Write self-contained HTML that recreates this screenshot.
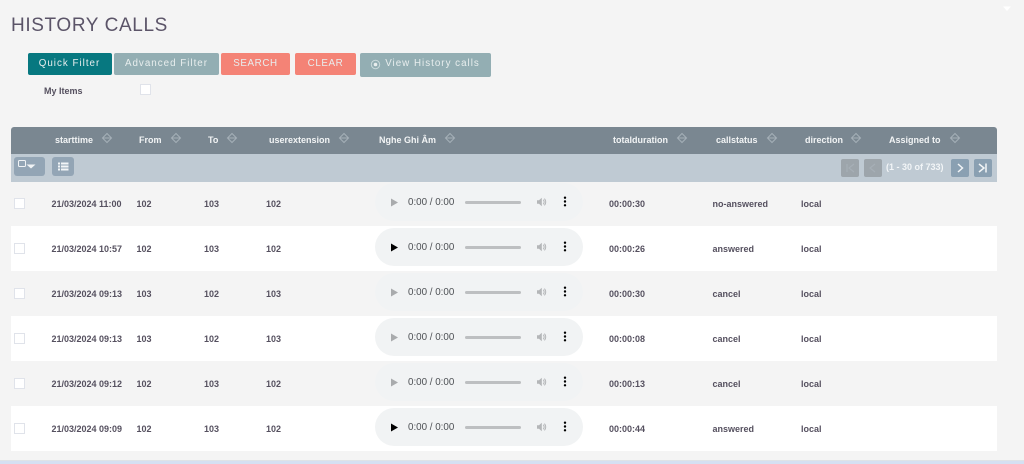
<!DOCTYPE html>
<html><head><meta charset="utf-8"><style>
*{box-sizing:border-box}
html,body{margin:0;padding:0;background:#f4f4f4}
body{width:1024px;height:464px;overflow:hidden;position:relative;font-family:"Liberation Sans","Noto Sans CJK JP",sans-serif;filter:blur(.35px)}
.a{position:absolute;white-space:nowrap}
.btn{position:absolute;top:53px;height:22px;border-radius:2px;color:#e8eeee;font-size:9.8px;line-height:22px;text-align:center;letter-spacing:1px}
.hd{position:absolute;top:134px;font-size:9px;font-weight:bold;color:#f2f4f5;line-height:12px;white-space:nowrap}
.si{position:absolute;top:132px;width:12px;height:12px}
.row{position:absolute;left:11px;width:986px;height:45px}
.t{position:absolute;font-size:9px;font-weight:bold;color:#55505f;line-height:12px;white-space:nowrap;top:16.500px}
.cb{position:absolute;left:3px;top:17px;width:11px;height:11px;background:#fff;border:1px solid #e0e3ea}
.pl{position:absolute;left:364px;top:2px;width:208px;height:38px;border-radius:19px;background:#f1f3f4}
.pl .tm{position:absolute;left:33px;top:12.500px;font-size:9.800px;color:#4d5054;line-height:13px;white-space:nowrap}
.pl .tr{position:absolute;left:90px;top:17.500px;width:56px;height:3px;border-radius:2px;background:#bdbfc1}
.pl svg{position:absolute}
.pg{position:absolute;top:159px;width:18px;height:18px;border-radius:2px}
</style></head><body>
<div class="a" style="left:11px;top:13.500px;font-size:19px;line-height:23px;color:#5b5468;letter-spacing:.62px">HISTORY CALLS</div>
<div class="btn" style="left:27.500px;width:84px;background:#077880">Quick Filter</div>
<div class="btn" style="left:114px;width:105px;background:#93aeb3">Advanced Filter</div>
<div class="btn" style="left:221px;width:69px;background:#f48376;letter-spacing:.6px">SEARCH</div>
<div class="btn" style="left:295px;width:61px;background:#f48376;letter-spacing:.6px">CLEAR</div>
<div class="btn" style="left:360px;width:131px;height:24px;background:#93aeb3;padding-left:14px">View History calls</div>
<svg class="a" style="left:370px;top:59px" width="11" height="11" viewBox="0 0 11 11"><circle cx="5.500" cy="5.500" r="4.200" fill="none" stroke="#c9d9db" stroke-width="1"/><circle cx="5.500" cy="5.500" r="1.800" fill="#e8eeee"/></svg>
<div class="a" style="left:44px;top:85px;font-size:9px;font-weight:bold;color:#55505f;line-height:12px">My Items</div>
<div class="a" style="left:140px;top:84px;width:11px;height:11px;background:#fff;border:1px solid #e0e3ea"></div>
<svg width="0" height="0" style="position:absolute"><defs>
<g id="s"><path d="M6 1.500L10.500 6 6 10.500 1.500 6z" fill="none" stroke="#a5b0b8" stroke-width="1"/><path d="M2 6h8" stroke="#a5b0b8" stroke-width="1"/></g>
<g id="v"><path d="M1 4.200h2l2.800-2.400v8.400L3 7.800H1z" fill="#b4b6b8"/><path d="M7.200 3.800a3 3 0 0 1 0 4.400M8.400 2.600a5 5 0 0 1 0 6.800" fill="none" stroke="#b4b6b8" stroke-width="1"/></g>
<g id="m"><circle cx="2" cy="1.700" r="1.200"/><circle cx="2" cy="5.500" r="1.200"/><circle cx="2" cy="9.300" r="1.200"/></g>
</defs></svg>
<div class="a" style="left:11px;top:127px;width:986px;height:27px;background:#7a8791;border-radius:3px 3px 0 0"></div>
<div class="a" style="left:11px;top:154px;width:986px;height:28px;background:#bfcad3"></div>
<div class="hd" style="left:55px">starttime</div><svg class="si" style="left:101px" viewBox="0 0 12 12"><use href="#s"/></svg>
<div class="hd" style="left:139px">From</div><svg class="si" style="left:170px" viewBox="0 0 12 12"><use href="#s"/></svg>
<div class="hd" style="left:208px">To</div><svg class="si" style="left:226px" viewBox="0 0 12 12"><use href="#s"/></svg>
<div class="hd" style="left:269px">userextension</div><svg class="si" style="left:338px" viewBox="0 0 12 12"><use href="#s"/></svg>
<div class="hd" style="left:379px">Nghe Ghi Âm</div><svg class="si" style="left:444px" viewBox="0 0 12 12"><use href="#s"/></svg>
<div class="hd" style="left:613px">totalduration</div><svg class="si" style="left:676px" viewBox="0 0 12 12"><use href="#s"/></svg>
<div class="hd" style="left:716px">callstatus</div><svg class="si" style="left:766px" viewBox="0 0 12 12"><use href="#s"/></svg>
<div class="hd" style="left:805px">direction</div><svg class="si" style="left:850px" viewBox="0 0 12 12"><use href="#s"/></svg>
<div class="hd" style="left:889px">Assigned to</div><svg class="si" style="left:949px" viewBox="0 0 12 12"><use href="#s"/></svg>
<div class="a" style="left:14px;top:157px;width:31px;height:19px;border-radius:3px;background:#93a5b5"></div>
<div class="a" style="left:18px;top:160px;width:8px;height:7px;border:1.300px solid #f0f3f5;border-radius:1.500px"></div>
<svg class="a" style="left:26px;top:164px" width="10" height="5"><path d="M.5 .5h9L5 4.500z" fill="#f0f3f5"/></svg>
<div class="a" style="left:52px;top:157px;width:22px;height:19px;border-radius:3px;background:#93a5b5"></div>
<svg class="a" style="left:57px;top:162px" width="12" height="9"><path d="M1 .5h2v2H1zM4 .5h7.500v2H4zM1 3.500h2v2H1zM4 3.500h7.500v2H4zM1 6.500h2v2H1zM4 6.500h7.500v2H4z" fill="#f2f5f7"/></svg>
<div class="pg" style="left:841px;background:#9da5ab"></div>
<div class="pg" style="left:864px;background:#9da5ab"></div>
<svg class="a" style="left:841px;top:159px" width="41" height="18" fill="none" stroke="#a6afb6" stroke-width="1.200"><path d="M6 5v8M13 5L8 9l5 4M34 5l-5 4 5 4"/></svg>
<div class="a" style="left:886px;top:161px;font-size:9px;font-weight:bold;color:#f2f5f7;line-height:13px">(1 - 30 of 733)</div>
<div class="pg" style="left:951px;background:#8aa0b2"></div>
<div class="pg" style="left:974px;background:#8aa0b2"></div>
<svg class="a" style="left:951px;top:159px" width="41" height="18" fill="none" stroke="#f2f5f7" stroke-width="1.500"><path d="M7 5l4.500 4L7 13M28 5l5 4-5 4M35 4.500v9"/></svg>

<div class="row" style="top:181px">
<div class="cb"></div><div class="t" style="left:40.500px">21/03/2024 11:00</div><div class="t" style="left:125.500px">102</div><div class="t" style="left:193px">103</div><div class="t" style="left:255px">102</div>
<div class="pl"><svg style="left:15px;top:15px" width="9" height="9"><path d="M1 .5L8 4.500 1 8.500z" fill="#a9abad"/></svg><div class="tm">0:00 / 0:00</div><div class="tr"></div><svg style="left:161px;top:13px" width="12" height="12"><use href="#v"/></svg><svg style="left:188px;top:13px" width="4" height="11"><use href="#m"/></svg></div>
<div class="t" style="left:598px">00:00:30</div><div class="t" style="left:701.500px">no-answered</div><div class="t" style="left:790px">local</div></div>

<div class="row" style="top:226px;background:#fff">
<div class="cb"></div><div class="t" style="left:40.500px">21/03/2024 10:57</div><div class="t" style="left:125.500px">102</div><div class="t" style="left:193px">103</div><div class="t" style="left:255px">102</div>
<div class="pl"><svg style="left:15px;top:15px" width="9" height="9"><path d="M1 .5L8 4.500 1 8.500z" fill="#000"/></svg><div class="tm">0:00 / 0:00</div><div class="tr"></div><svg style="left:161px;top:13px" width="12" height="12"><use href="#v"/></svg><svg style="left:188px;top:13px" width="4" height="11"><use href="#m"/></svg></div>
<div class="t" style="left:598px">00:00:26</div><div class="t" style="left:701.500px">answered</div><div class="t" style="left:790px">local</div></div>

<div class="row" style="top:271px">
<div class="cb"></div><div class="t" style="left:40.500px">21/03/2024 09:13</div><div class="t" style="left:125.500px">103</div><div class="t" style="left:193px">102</div><div class="t" style="left:255px">103</div>
<div class="pl"><svg style="left:15px;top:15px" width="9" height="9"><path d="M1 .5L8 4.500 1 8.500z" fill="#a9abad"/></svg><div class="tm">0:00 / 0:00</div><div class="tr"></div><svg style="left:161px;top:13px" width="12" height="12"><use href="#v"/></svg><svg style="left:188px;top:13px" width="4" height="11"><use href="#m"/></svg></div>
<div class="t" style="left:598px">00:00:30</div><div class="t" style="left:701.500px">cancel</div><div class="t" style="left:790px">local</div></div>

<div class="row" style="top:316px;background:#fff">
<div class="cb"></div><div class="t" style="left:40.500px">21/03/2024 09:13</div><div class="t" style="left:125.500px">103</div><div class="t" style="left:193px">102</div><div class="t" style="left:255px">103</div>
<div class="pl"><svg style="left:15px;top:15px" width="9" height="9"><path d="M1 .5L8 4.500 1 8.500z" fill="#a9abad"/></svg><div class="tm">0:00 / 0:00</div><div class="tr"></div><svg style="left:161px;top:13px" width="12" height="12"><use href="#v"/></svg><svg style="left:188px;top:13px" width="4" height="11"><use href="#m"/></svg></div>
<div class="t" style="left:598px">00:00:08</div><div class="t" style="left:701.500px">cancel</div><div class="t" style="left:790px">local</div></div>

<div class="row" style="top:361px">
<div class="cb"></div><div class="t" style="left:40.500px">21/03/2024 09:12</div><div class="t" style="left:125.500px">102</div><div class="t" style="left:193px">103</div><div class="t" style="left:255px">102</div>
<div class="pl"><svg style="left:15px;top:15px" width="9" height="9"><path d="M1 .5L8 4.500 1 8.500z" fill="#a9abad"/></svg><div class="tm">0:00 / 0:00</div><div class="tr"></div><svg style="left:161px;top:13px" width="12" height="12"><use href="#v"/></svg><svg style="left:188px;top:13px" width="4" height="11"><use href="#m"/></svg></div>
<div class="t" style="left:598px">00:00:13</div><div class="t" style="left:701.500px">cancel</div><div class="t" style="left:790px">local</div></div>

<div class="row" style="top:406px;background:#fff">
<div class="cb"></div><div class="t" style="left:40.500px">21/03/2024 09:09</div><div class="t" style="left:125.500px">102</div><div class="t" style="left:193px">103</div><div class="t" style="left:255px">102</div>
<div class="pl"><svg style="left:15px;top:15px" width="9" height="9"><path d="M1 .5L8 4.500 1 8.500z" fill="#000"/></svg><div class="tm">0:00 / 0:00</div><div class="tr"></div><svg style="left:161px;top:13px" width="12" height="12"><use href="#v"/></svg><svg style="left:188px;top:13px" width="4" height="11"><use href="#m"/></svg></div>
<div class="t" style="left:598px">00:00:44</div><div class="t" style="left:701.500px">answered</div><div class="t" style="left:790px">local</div></div>

<svg class="a" style="left:1002px;top:6px" width="10" height="6"><path d="M1 .5h8L5 5z" fill="#fff"/></svg>
<div class="a" style="left:0;top:460px;width:1024px;height:1px;background:#dfe3e6"></div>
<div class="a" style="left:0;top:461px;width:1024px;height:3px;background:#d5e0f2"></div>
</body></html>
